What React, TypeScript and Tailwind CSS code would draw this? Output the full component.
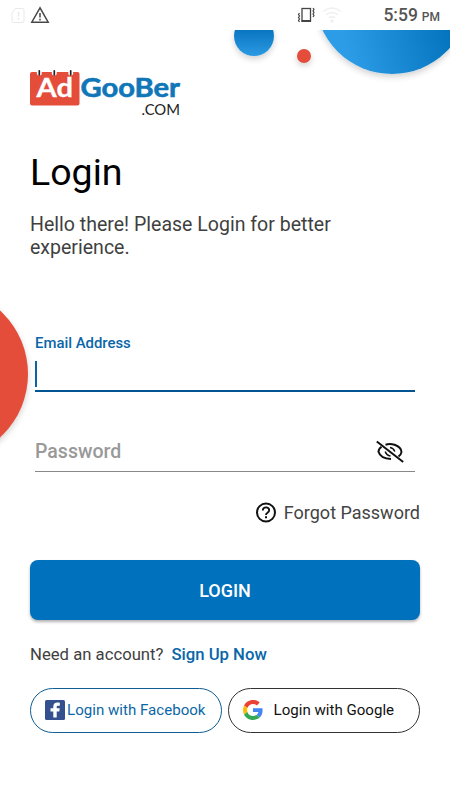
import React from "react";

const StatusBar = () => {
  return (
    <div className="relative z-10 flex h-[30px] items-center bg-white text-[#555]">
      <svg className="ml-[11px] h-[17px] w-[14px]" viewBox="0 0 14 17" fill="none" stroke="#e9e9e9">
        <path d="M4.500 1.500H11Q13 1.500 13 3V14Q13 15.500 11 15.500H2.500Q1 15.500 1 14V6Z" />
        <path d="M7.500 5v4.500M7.500 11v2" strokeWidth="1.500" />
      </svg>
      <svg className="ml-[5px] h-[18px] w-[20px]" viewBox="0 0 20 18" fill="none" stroke="#484848" strokeWidth="1.500">
        <path d="M10 1.800L1.800 16.200H18.200z" />
        <path d="M10 7v4.500M10 12.800v1.700" />
      </svg>
      <div className="flex-1" />
      <svg className="h-[18px] w-[18px]" viewBox="0 0 18 18" fill="none" stroke="#444">
        <rect x="5" y="2.500" width="8.500" height="12.500" strokeWidth="1.300" />
        <path d="M4.500 15h9.500" strokeWidth="2" />
        <path d="M2.500 7l-1 1.500 1 1.500-1 1.500 1 1.500-1 1.500 1 1.500M16 2l1 1.500-1 1.500 1 1.500-1 1.500 1 1.500-1 1.500" strokeWidth="1.200" />
      </svg>
      <svg className="ml-[7px] h-[18px] w-[20px]" viewBox="0 0 20 18" fill="none" stroke="#efefef" strokeWidth="1.500">
        <path d="M1 5.500Q10-1.500 19 5.500M4 9q6-4.800 12 0M7 12q3-2.500 6 0" />
        <circle cx="10" cy="15" r="1" fill="#efefef" />
      </svg>
      <p className="mr-[10px] ml-[41px] whitespace-pre pt-[3px] text-[17.500px] leading-[27px] font-medium">
        5:59<span className="ml-[4px] text-[12px]">PM</span>
      </p>
    </div>
  );
};

const Bubbles = () => {
  return (
    <div className="pointer-events-none absolute inset-0 overflow-hidden">
      <div className="absolute top-[15.500px] left-[234px] h-[40px] w-[39.500px] rounded-full bg-linear-to-b from-[#0573bf] from-30% to-[#2a9ae3] shadow-[0_3px_6px_rgba(0,0,0,0.18)]" />
      <div className="absolute top-[49px] left-[297px] h-[14px] w-[13.500px] rounded-full bg-[#e44d3a] shadow-[0_3px_6px_rgba(0,0,0,0.18)]" />
      <div className="absolute top-[-80px] left-[315px] h-[154px] w-[154px] rounded-full bg-linear-[75deg] from-[#2b9ce5] from-20% to-[#0070ba] to-80% shadow-[0_3px_6px_rgba(0,0,0,0.18)]" />
      <div className="absolute top-[288px] left-[-144.500px] h-[172px] w-[172px] rounded-full bg-[#e54d3b] shadow-[0_3px_6px_rgba(0,0,0,0.18)]" />
    </div>
  );
};

const Logo = () => {
  return (
    <svg className="h-[50px] w-[152px] font-['Lato',sans-serif]" viewBox="0 0 152 50">
      <rect y="4" width="49.500" height="33.500" rx="2" fill="#e54d3b" />
      <g fill="#fff">
        <circle cx="9.300" cy="5" r="2.500" />
        <circle cx="24.300" cy="5" r="2.500" />
        <circle cx="40.700" cy="5" r="2.500" />
      </g>
      <path d="M9.300 2.800v4M24.300 2.800v4M40.700 2.800v4" stroke="#222" strokeWidth="1.700" strokeLinecap="round" />
      <text x="6.500" y="29.300" fontSize="26" fontWeight="700" fill="#fff" stroke="#fff" strokeWidth="0.300" textLength="36.500" lengthAdjust="spacingAndGlyphs">Ad</text>
      <text x="50.500" y="29.300" fontSize="26" fontWeight="700" fill="#0f76b8" stroke="#0f76b8" strokeWidth="0.600" textLength="99.500" lengthAdjust="spacingAndGlyphs">GooBer</text>
      <text x="111.500" y="47" fontSize="14.500" fill="#222" textLength="38.500" lengthAdjust="spacingAndGlyphs">.COM</text>
    </svg>
  );
};

const FacebookIcon = () => {
  return (
    <svg className="h-5 w-5" viewBox="0 0 20 20">
      <rect width="20" height="20" rx="1.500" fill="#35508f" />
      <path d="M8.300 17.500v-6H5.500V8.200h2.800V6.500c0-2.800 1.600-4 4-4 1.200 0 2 .1 2.500.2v3h-1.600c-1.300 0-1.500.6-1.500 1.400v1.100h3l-.4 3.300h-2.600v6z" fill="#fff" />
    </svg>
  );
};

const GoogleIcon = () => {
  return (
    <svg className="h-5 w-5" viewBox="0 0 48 48">
      <path fill="#EA4335" d="M24 9.500c3.540 0 6.710 1.220 9.210 3.600l6.850-6.850C35.900 2.380 30.470 0 24 0 14.620 0 6.510 5.380 2.560 13.220l7.980 6.190C12.430 13.720 17.740 9.500 24 9.500z" />
      <path fill="#4285F4" d="M46.980 24.550c0-1.570-.15-3.090-.38-4.550H24v9.020h12.940c-.58 2.960-2.260 5.480-4.780 7.180l7.730 6c4.510-4.180 7.090-10.360 7.090-17.650z" />
      <path fill="#FBBC05" d="M10.530 28.590c-.48-1.450-.76-2.990-.76-4.590s.27-3.140.76-4.590l-7.980-6.190C.92 16.460 0 20.120 0 24c0 3.880.92 7.540 2.560 10.780l7.970-6.190z" />
      <path fill="#34A853" d="M24 48c6.480 0 11.930-2.130 15.890-5.810l-7.730-6c-2.150 1.450-4.920 2.300-8.160 2.300-6.260 0-11.570-4.220-13.470-9.910l-7.980 6.190C6.510 42.620 14.620 48 24 48z" />
    </svg>
  );
};

const App = () => {
  return (
    <div className="relative h-[800px] w-[450px] overflow-hidden bg-white font-['Roboto',sans-serif]">
      <Bubbles />
      <StatusBar />
      <div className="relative flex flex-col px-[30px] pt-[38px]">
        <Logo />
        <h1 className="mt-[31px] text-[37.500px] leading-[46px] text-black">Login</h1>
        <p className="mt-[18px] w-[330px] text-[19.550px] leading-[23px] text-[#3f3f3f]">
          Hello there! Please Login for better experience.
        </p>

        <div className="mt-[74px] flex flex-col px-[5px]">
          <p className="text-[14.900px] leading-[20px] font-medium text-[#0a66a8]">Email Address</p>
          <div className="flex h-[39px] items-end border-b-2 border-[#035592] pb-[3px]">
            <div className="h-[26px] w-[2px] bg-[#0b65a5]" />
          </div>
          <div className="mt-[40px] flex h-[40px] items-center justify-between border-b border-[#888] pr-[10px]">
            <p className="text-[19.500px] leading-[24px] font-medium text-[#999]">Password</p>
            <svg className="h-[24px] w-[30px]" viewBox="0 0 30 24" fill="none" stroke="#111" strokeWidth="2">
              <path d="M1.800 1.500L28.200 22" />
              <path d="M10.500 4.700Q15 3.400 19.500 4.800Q26.500 7.500 26.500 12Q26.200 14.500 23.500 16.500" />
              <path d="M6.500 6.800Q3.500 9 3.500 11.700Q5.500 18.500 16 19" />
              <path d="M15 7.500Q18.500 8 19.800 11.500M10.200 11.500Q11.500 15.500 15.500 16" strokeWidth="1.500" />
            </svg>
          </div>
        </div>

        <div className="mt-[29px] flex h-[24px] items-center justify-end">
          <svg className="h-[22px] w-[22px]" viewBox="0 0 22 22" fill="none" stroke="#111" strokeWidth="2">
            <circle cx="11" cy="10.500" r="9" />
            <path d="M7.800 8.500q0-3.200 3.200-3.200T14.200 8.300Q14.200 9.500 12.500 10.800Q11 11.800 11 13" strokeWidth="1.800" />
            <path d="M11 14.300v2" />
          </svg>
          <p className="ml-[7px] text-[18px] leading-[24px] text-[#444]">Forgot Password</p>
        </div>

        <button className="mt-[35px] h-[60px] rounded-[8px] bg-[#0071bc] text-[18px] font-medium text-white shadow-[0_2px_3px_rgba(0,0,0,0.3)]">
          LOGIN
        </button>

        <div className="mt-[24px] flex h-[22px] items-center text-[16.700px]">
          <p className="text-[#3f3f3f]">Need an account?</p>
          <p className="ml-[8px] font-medium text-[#0866a9]">Sign Up Now</p>
        </div>

        <div className="mt-[21.500px] flex gap-[6px]">
          <button className="flex h-[45px] w-[192px] items-center rounded-full border border-[#0e5d94] pl-[14px] text-[15.100px] text-[#0c67a6]">
            <FacebookIcon />
            <span className="ml-[2px] whitespace-nowrap pt-[1px]">Login with Facebook</span>
          </button>
          <button className="flex h-[45px] w-[192px] items-center rounded-full border border-[#333] pl-[14px] text-[15.100px] text-[#111]">
            <GoogleIcon />
            <span className="ml-[10.500px] whitespace-nowrap pt-[1px]">Login with Google</span>
          </button>
        </div>
      </div>
    </div>
  );
};

export default App;
